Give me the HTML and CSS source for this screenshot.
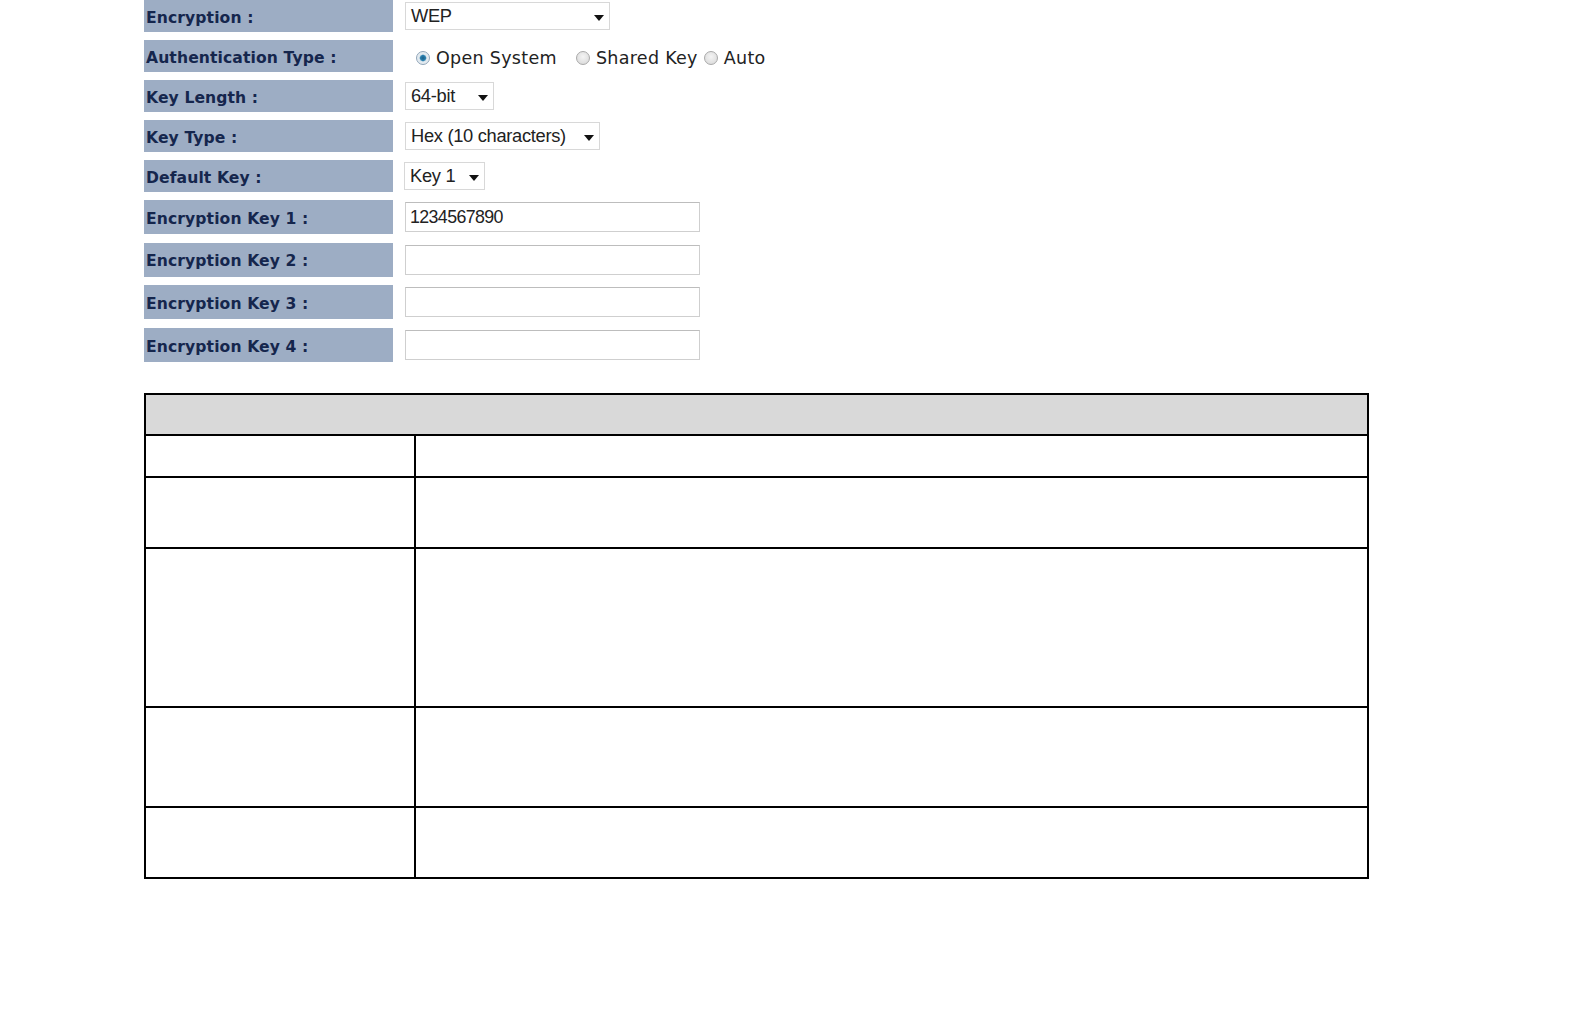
FILE: index.html
```html
<!DOCTYPE html>
<html>
<head>
    <title>Wireless Security</title>
    <link rel="stylesheet" href="styles.css">
</head>
<body>
    <div class="security-form">
        <div class="form-row">
            <div class="form-label">Encryption :</div>
            <div class="form-field">
                <div class="select-box sel-wep">WEP<span class="caret"></span></div>
            </div>
        </div>
        <div class="form-row">
            <div class="form-label">Authentication Type :</div>
            <div class="form-field radios">
                <span class="radio checked"></span><span class="radio-text first">Open System</span>
                <span class="radio"></span><span class="radio-text">Shared Key</span>
                <span class="radio"></span><span class="radio-text">Auto</span>
            </div>
        </div>
        <div class="form-row">
            <div class="form-label">Key Length :</div>
            <div class="form-field">
                <div class="select-box sel-len">64-bit<span class="caret"></span></div>
            </div>
        </div>
        <div class="form-row">
            <div class="form-label">Key Type :</div>
            <div class="form-field">
                <div class="select-box sel-type">Hex (10 characters)<span class="caret"></span></div>
            </div>
        </div>
        <div class="form-row">
            <div class="form-label">Default Key :</div>
            <div class="form-field">
                <div class="select-box sel-key">Key 1<span class="caret"></span></div>
            </div>
        </div>
        <div class="form-row tall">
            <div class="form-label">Encryption Key 1 :</div>
            <div class="form-field">
                <div class="text-box">1234567890</div>
            </div>
        </div>
        <div class="form-row tall">
            <div class="form-label">Encryption Key 2 :</div>
            <div class="form-field">
                <div class="text-box"></div>
            </div>
        </div>
        <div class="form-row tall">
            <div class="form-label">Encryption Key 3 :</div>
            <div class="form-field">
                <div class="text-box"></div>
            </div>
        </div>
        <div class="form-row tall">
            <div class="form-label">Encryption Key 4 :</div>
            <div class="form-field">
                <div class="text-box"></div>
            </div>
        </div>
    </div>

    <table class="info-table">
        <tr class="head-row"><td colspan="2"></td></tr>
        <tr class="r1"><td class="name-col"></td><td></td></tr>
        <tr class="r2"><td class="name-col"></td><td></td></tr>
        <tr class="r3"><td class="name-col"></td><td></td></tr>
        <tr class="r4"><td class="name-col"></td><td></td></tr>
        <tr class="r5"><td class="name-col"></td><td></td></tr>
    </table>
</body>
</html>
```

FILE: styles.css
```css
body {
    margin: 0;
    padding: 0 0 0 144px;
    background: #fff;
}

.security-form {
    width: 720px;
}

.form-row {
    display: flex;
    height: 32px;
    margin-bottom: 8px;
}

.form-row.tall {
    height: 34px;
    margin-top: 1px;
    margin-bottom: 8.7px;
}

.form-label {
    flex: none;
    width: 249px;
    box-sizing: border-box;
    padding: 3px 0 0 2px;
    background: #9dadc4;
    color: #15264d;
    font-family: "DejaVu Sans", Verdana, sans-serif;
    font-weight: bold;
    font-size: 15.6px;
    display: flex;
    align-items: center;
    letter-spacing: 0.1px;
}

.form-field {
    display: flex;
    align-items: center;
    padding-left: 12px;
}

.select-box {
    position: relative;
    height: 28px;
    box-sizing: border-box;
    border: 1px solid #d8d8d8;
    font-family: "Liberation Sans", Arial, sans-serif;
    font-size: 18.3px;
    color: #222;
    display: flex;
    align-items: center;
    padding-left: 5px;
    letter-spacing: -0.3px;
}

.caret {
    position: absolute;
    right: 5px;
    top: 12px;
    width: 0;
    height: 0;
    border-left: 5px solid transparent;
    border-right: 5px solid transparent;
    border-top: 6px solid #111;
}

.sel-wep { width: 205px; }
.sel-len { width: 89px; }
.sel-type { width: 195px; }
.sel-key { width: 81px; margin-left: -1px; }

.text-box {
    width: 295px;
    height: 30px;
    box-sizing: border-box;
    border: 1px solid #cfcfcf;
    border-top-color: #bdbdbd;
    font-family: "Liberation Sans", Arial, sans-serif;
    font-size: 17.8px;
    color: #222;
    display: flex;
    align-items: center;
    padding-left: 4px;
    letter-spacing: -0.6px;
}

.radios {
    padding-left: 23px;
    padding-top: 3px;
}

.radio {
    width: 14px;
    height: 14px;
    flex: none;
    border-radius: 50%;
    box-sizing: border-box;
    border: 1px solid #a9a9a9;
    background: radial-gradient(circle at 50% 40%, #f4f4f4 0%, #d6d6d6 100%);
    margin-right: 6px;
}

.radio.checked {
    border-color: #8fa4b8;
    background: radial-gradient(circle at 50% 50%, #1b5f86 0%, #2a7fae 30%, #dfe8ee 45%, #eef2f5 100%);
}

.radio-text {
    font-family: "DejaVu Sans", Verdana, sans-serif;
    font-size: 17.5px;
    color: #222;
    margin-right: 6px;
    letter-spacing: 0.3px;
}

.radio-text.first {
    margin-right: 19px;
}

.info-table {
    margin-top: 31px;
    width: 1225px;
    border-collapse: collapse;
}

.info-table td {
    border: 2px solid #000;
    padding: 0;
}

.head-row td {
    background: #d9d9d9;
    height: 39px;
}

.name-col {
    width: 268px;
}

.r1 td { height: 40px; }
.r2 td { height: 69px; }
.r3 td { height: 157px; }
.r4 td { height: 98px; }
.r5 td { height: 69px; }
```
